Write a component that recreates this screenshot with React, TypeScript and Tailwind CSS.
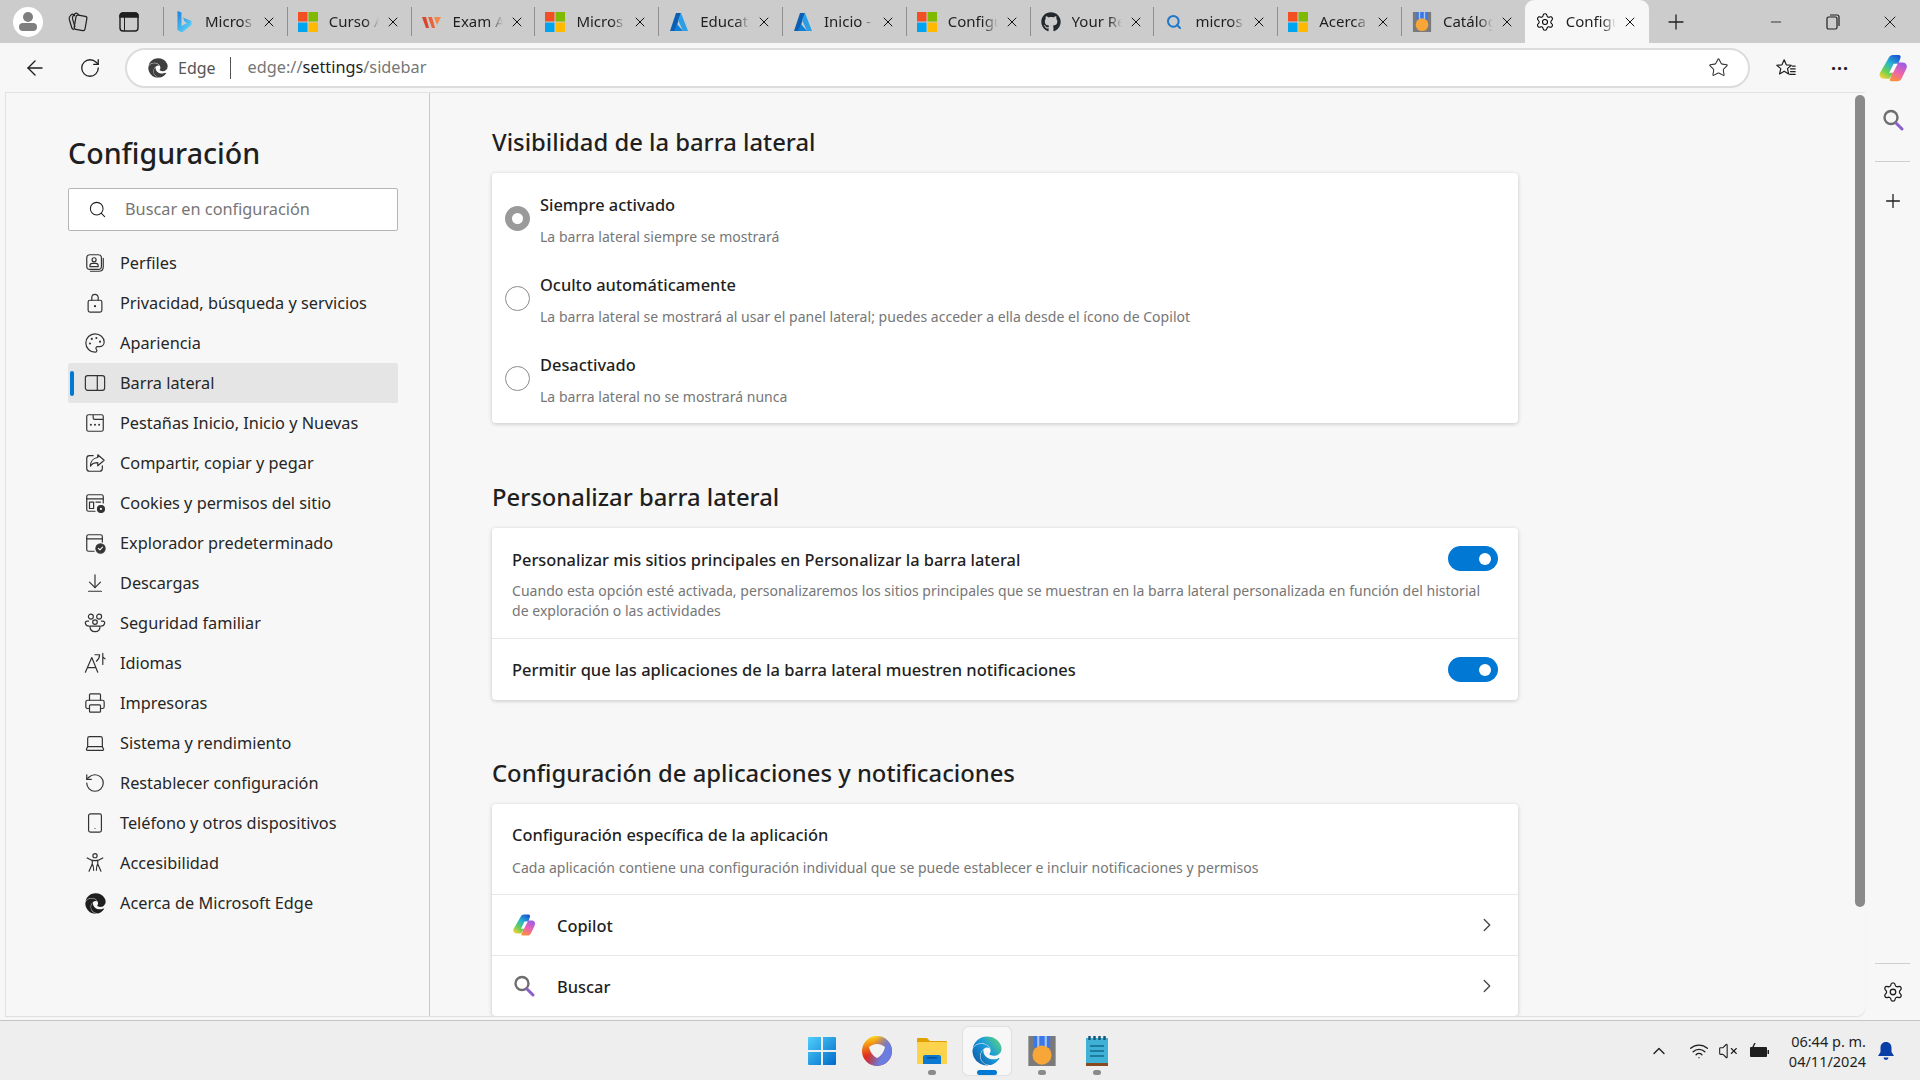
import type { ReactNode } from 'react';
import {
  ArrowDownToLine,
  ArrowLeft,
  ChevronRight,
  ChevronUp,
  Laptop,
  Minus,
  Palette,
  Plus,
  Printer,
  RotateCcw,
  RotateCw,
  Search,
  Settings,
  Smartphone,
  Star,
  VolumeX,
  Wifi,
  X,
} from 'lucide-react';
import { FaEdge, FaGithub } from 'react-icons/fa';

const font = "font-['Noto_Sans','Liberation_Sans',sans-serif]";

function Svg({ size = 22, children }: { size?: number; children: ReactNode }) {
  return (
    <svg width={size} height={size} viewBox="0 0 24 24" fill="none" stroke="currentColor" strokeWidth="1.3" strokeLinecap="round" strokeLinejoin="round">
      {children}
    </svg>
  );
}

function MsLogo() {
  return (
    <svg width="20" height="20" viewBox="0 0 20 20">
      <rect width="9.5" height="9.5" fill="#f25022" />
      <rect x="10.5" width="9.5" height="9.5" fill="#7fba00" />
      <rect y="10.5" width="9.5" height="9.5" fill="#00a4ef" />
      <rect x="10.5" y="10.5" width="9.5" height="9.5" fill="#ffb900" />
    </svg>
  );
}

function AzureLogo() {
  return (
    <svg width="20" height="20" viewBox="0 0 20 20">
      <path d="M7 1h5L6 19H1z" fill="#0a5fb4" />
      <path d="M12 1l7 18h-5L9 8z" fill="#2a9fe8" />
      <path d="M8 12l6 7H5z" fill="#0f7fd6" />
    </svg>
  );
}

function BingLogo() {
  return (
    <svg width="15" height="22" viewBox="0 0 15 22">
      <defs>
        <linearGradient id="bingGrad" x1="0" y1="0" x2="0.7" y2="1">
          <stop offset="0" stopColor="#1a7fdc" />
          <stop offset="1" stopColor="#5fd4f7" />
        </linearGradient>
      </defs>
      <path d="M0.500 0l4 1.500v13.500l5.500-3-2.500-1.500-1.500-4 8.500 3.500v4l-9.500 7.500-4.500-2.500z" fill="url(#bingGrad)" />
    </svg>
  );
}

function WhizLogo() {
  return (
    <svg width="20" height="20" viewBox="0 0 20 20">
      <path d="M0 5h4l3 11H4z" fill="#d8452c" />
      <path d="M6 5h4l3 11h-3z" fill="#e8623c" />
      <path d="M12 5h7l-4 8z" fill="#f08a4c" />
    </svg>
  );
}

function MedalLogo({ size = 22 }: { size?: number }) {
  return (
    <svg width={size} height={size} viewBox="0 0 22 22">
      <rect x="1" width="20" height="22" fill="#7a7a7a" />
      <path d="M5 0h12v8l-6 4-6-4z" fill="#3b78e7" />
      <path d="M7.500 0h1.500v8H7.500zM13 0h1.500v8H13z" fill="#a9c6f5" />
      <circle cx="11" cy="14" r="7" fill="#f7a637" />
    </svg>
  );
}

function CopilotLogo({ size = 24 }: { size?: number }) {
  const id = `cp${size}`;
  return (
    <svg width={size} height={size} viewBox="0 0 24 24">
      <defs>
        <linearGradient id={`${id}a`} x1="0.8" y1="0" x2="0.2" y2="1">
          <stop offset="0" stopColor="#1c56d6" />
          <stop offset="0.4" stopColor="#27b4cf" />
          <stop offset="0.75" stopColor="#6fd24f" />
          <stop offset="1" stopColor="#f3cf3a" />
        </linearGradient>
        <linearGradient id={`${id}b`} x1="0.7" y1="0" x2="0.3" y2="1">
          <stop offset="0" stopColor="#9a5ce8" />
          <stop offset="0.55" stopColor="#ee64ac" />
          <stop offset="1" stopColor="#f9913c" />
        </linearGradient>
      </defs>
      <path d="M8.500 4C9.200 2.300 10.500 1.500 12 1.500h4.500c1.300 0 1.900 1 1.500 2.200L16.500 8 12 16l-3 4.500H5C2 20.500.6 18.200 1.500 16z" fill={`url(#${id}a)`} />
      <path d="M15.500 22.500c1.600 0 2.800-.8 3.500-2.300l3.800-8c.9-2.200-.3-4.700-3-4.700H15L9.500 21c-.4 1 .3 1.500 1.200 1.500z" fill={`url(#${id}b)`} />
      <path d="M12.500 8.500h3.300L12 15.800H9z" fill="#ffffff" />
    </svg>
  );
}

function BuscarLogo() {
  return (
    <svg width="24" height="24" viewBox="0 0 24 24" fill="none" strokeWidth="2.4" strokeLinecap="round">
      <circle cx="10" cy="9.500" r="6.500" stroke="#6e6e6e" />
      <path d="M15 15l6 6" stroke="#8a5fc9" strokeWidth="3" />
    </svg>
  );
}

const tabs: { icon: ReactNode; title: string; active?: boolean }[] = [
  { icon: <BingLogo />, title: 'Micros' },
  { icon: <MsLogo />, title: 'Curso A' },
  { icon: <WhizLogo />, title: 'Exam A' },
  { icon: <MsLogo />, title: 'Micros' },
  { icon: <AzureLogo />, title: 'Educati' },
  { icon: <AzureLogo />, title: 'Inicio -' },
  { icon: <MsLogo />, title: 'Configu' },
  { icon: <FaGithub size={20} color="#24292f" />, title: 'Your Re' },
  { icon: <Search size={16} strokeWidth={3} color="#2077c9" />, title: 'micros' },
  { icon: <MsLogo />, title: 'Acerca' },
  { icon: <MedalLogo size={20} />, title: 'Catálog' },
  { icon: <Settings size={20} strokeWidth={1.3} />, title: 'Configu', active: true },
];

const navItems: { icon: ReactNode; label: string; active?: boolean }[] = [
  {
    label: 'Perfiles',
    icon: (
      <Svg>
        <rect x="3" y="3" width="16" height="16" rx="3.500" />
        <path d="M21 7v9c0 3-2 5-5 5H7" />
        <circle cx="11" cy="8.500" r="2.200" />
        <path d="M6.500 16v-1c0-1.500 1-2.500 2.500-2.500h4c1.500 0 2.500 1 2.500 2.500v1z" />
      </Svg>
    ),
  },
  {
    label: 'Privacidad, búsqueda y servicios',
    icon: (
      <Svg>
        <rect x="4.500" y="9" width="15" height="13" rx="2" />
        <path d="M8.500 9V6a3.500 3.500 0 0 1 7 0v3" />
        <circle cx="12" cy="15.500" r="0.600" fill="currentColor" />
      </Svg>
    ),
  },
  { label: 'Apariencia', icon: <Palette size={22} strokeWidth={1.3} /> },
  {
    label: 'Barra lateral',
    active: true,
    icon: (
      <Svg>
        <rect x="1.500" y="4" width="21" height="16" rx="2.500" />
        <path d="M14.500 4v16" />
      </Svg>
    ),
  },
  {
    label: 'Pestañas Inicio, Inicio y Nuevas',
    icon: (
      <Svg>
        <path d="M10 3H5a2 2 0 0 0-2 2v14a2 2 0 0 0 2 2h14a2 2 0 0 0 2-2V5a2 2 0 0 0-2-2h-9v3.500a1.500 1.500 0 0 0 1.500 1.500H21" />
        <path d="M7.500 14h.01M12 14h.01M16.500 14h.01" strokeWidth="2.200" />
      </Svg>
    ),
  },
  {
    label: 'Compartir, copiar y pegar',
    icon: (
      <Svg>
        <path d="M10 4H6a3 3 0 0 0-3 3v11a3 3 0 0 0 3 3h11a3 3 0 0 0 3-3v-3" />
        <path d="M15 3l7 6-7 6v-3.500c-4 0-6.500 1-8 4 0-5 3-9 8-9.500z" />
      </Svg>
    ),
  },
  {
    label: 'Cookies y permisos del sitio',
    icon: (
      <Svg>
        <path d="M12 21H5a2 2 0 0 1-2-2V5a2 2 0 0 1 2-2h14a2 2 0 0 1 2 2v7" />
        <path d="M3 7.500h18" />
        <rect x="6" y="11" width="4.500" height="7" />
        <path d="M13 11h5" />
        <circle cx="18.500" cy="18.500" r="3.800" fill="currentColor" />
        <circle cx="18.500" cy="18.500" r="1.200" fill="#f7f7f7" stroke="none" />
      </Svg>
    ),
  },
  {
    label: 'Explorador predeterminado',
    icon: (
      <Svg>
        <path d="M11 21H5a2 2 0 0 1-2-2V5a2 2 0 0 1 2-2h13a2 2 0 0 1 2 2v6" />
        <path d="M3 7.500h17" />
        <circle cx="18" cy="18" r="5" fill="currentColor" />
        <path d="M15.800 18l1.600 1.500 2.800-3" stroke="#f7f7f7" />
      </Svg>
    ),
  },
  { label: 'Descargas', icon: <ArrowDownToLine size={22} strokeWidth={1.3} /> },
  {
    label: 'Seguridad familiar',
    icon: (
      <Svg>
        <circle cx="7.500" cy="5" r="2.700" />
        <circle cx="16.500" cy="5" r="2.700" />
        <circle cx="12" cy="11" r="2.500" />
        <path d="M5 10H3.500C2 10 1 11 1.500 12.500 2 14.500 3.500 15.500 5.500 15.500M19 10h1.500c1.500 0 2.500 1 2 2.500-.5 2-2 3-4 3" />
        <path d="M6.500 15.500h11c0 3.500-2 6-5.500 6s-5.500-2.500-5.500-6z" />
      </Svg>
    ),
  },
  {
    label: 'Idiomas',
    icon: (
      <Svg>
        <path d="M1.500 22L8.500 6l6.500 16M4 17h9" />
        <path d="M12 3h5c0 3-1 5-3.500 7M20.500 1.500v12M20.500 5.500l2.500 2" />
      </Svg>
    ),
  },
  { label: 'Impresoras', icon: <Printer size={22} strokeWidth={1.3} /> },
  { label: 'Sistema y rendimiento', icon: <Laptop size={22} strokeWidth={1.3} /> },
  { label: 'Restablecer configuración', icon: <RotateCcw size={22} strokeWidth={1.3} /> },
  { label: 'Teléfono y otros dispositivos', icon: <Smartphone size={22} strokeWidth={1.3} /> },
  {
    label: 'Accesibilidad',
    icon: (
      <Svg>
        <circle cx="12" cy="4" r="2.300" />
        <path d="M3.500 6.500c3 2 5.500 3 8.500 3s5.500-1 8.500-3M9 10v3l-3.500 8M15 10v3l3.500 8M9 13c1 1.500 1.500 4 1.500 7M15 13c-1 1.500-1.500 4-1.500 7" />
      </Svg>
    ),
  },
  { label: 'Acerca de Microsoft Edge', icon: <FaEdge size={21} color="#1f1f1f" /> },
];

function Tab({ icon, title, active }: { icon: ReactNode; title: string; active?: boolean }) {
  return (
    <div className={`relative flex h-[43px] w-[123.8px] shrink-0 items-center pl-[10px] ${active ? 'rounded-t-[9px] bg-[#f7f7f7]' : 'border-l border-[#8f8f8f] [border-image:linear-gradient(#cccccc_18%,#8f8f8f_18%,#8f8f8f_82%,#cccccc_82%)_1]'}`}>
      <span className="flex w-[20px] shrink-0 justify-center">{icon}</span>
      <span className="ml-[11px] w-[50px] overflow-hidden whitespace-nowrap text-[15px] text-[#1f1f1f] [mask-image:linear-gradient(90deg,#000_72%,transparent)]">{title}</span>
      <X size={16} strokeWidth={1.5} className="ml-[6px] shrink-0 text-[#111]" />
    </div>
  );
}

function Heading({ children, className = '' }: { children: ReactNode; className?: string }) {
  return <h2 className={`h-[36px] text-[23.8px] font-medium leading-[36px] text-[#1f1f1f] ${className}`}>{children}</h2>;
}

function Card({ children }: { children: ReactNode }) {
  return <div className="mt-[13px] w-[1026px] rounded-[4px] bg-white shadow-[0_1px_4px_rgba(0,0,0,0.2)]">{children}</div>;
}

function RadioRow({ title, desc, checked }: { title: string; desc: string; checked?: boolean }) {
  return (
    <div className="flex h-[80px] items-center pl-[13px]">
      <span className={`h-[25px] w-[25px] shrink-0 rounded-full bg-white ${checked ? 'border-[7px] border-[#9a9a9a]' : 'border border-[#8a8a8a]'}`} />
      <div className="ml-[10px] flex flex-col pt-[5px]">
        <span className="text-[16.4px] font-medium leading-[22px] text-[#1f1f1f]">{title}</span>
        <span className="mt-[11px] text-[14px] leading-[20px] tracking-[0.03px] text-[#767676]">{desc}</span>
      </div>
    </div>
  );
}

function Toggle() {
  return (
    <span className="flex h-[25px] w-[50px] shrink-0 items-center justify-end rounded-full bg-[#0078d4] pr-[7px]">
      <span className="h-[12px] w-[12px] rounded-full bg-white" />
    </span>
  );
}

function AppRow({ icon, label }: { icon: ReactNode; label: string }) {
  return (
    <div className="flex h-[61px] items-center border-t border-[#e8e8e8] pl-[20px] pr-[20px]">
      <span className="flex w-[24px] justify-center">{icon}</span>
      <span className="ml-[21px] flex-1 pt-[2px] text-[16.4px] font-medium text-[#1f1f1f]">{label}</span>
      <ChevronRight size={22} strokeWidth={1.4} className="text-[#444]" />
    </div>
  );
}

function TaskDot({ children, dot, active }: { children: ReactNode; dot?: boolean; active?: boolean }) {
  return (
    <div className={`relative flex h-[48px] w-[48px] items-center justify-center rounded-[5px] ${active ? 'bg-[#f7f7f7] shadow-[0_0_2px_rgba(0,0,0,0.2)]' : ''}`}>
      {children}
      {dot && <span className="absolute bottom-0 h-[5px] w-[8px] rounded-full bg-[#8a8a8a]" />}
      {active && <span className="absolute bottom-0 h-[5px] w-[20px] rounded-full bg-[#0078d4]" />}
    </div>
  );
}

export default function App() {
  return (
    <div className={`flex h-screen w-[1920px] flex-col overflow-hidden bg-[#f7f7f7] ${font}`}>
      <svg width="0" height="0" className="absolute">
        <defs>
          <linearGradient id="edgeGrad" x1="1" y1="0.1" x2="0" y2="0.9">
            <stop offset="0" stopColor="#5ed67a" />
            <stop offset="0.45" stopColor="#1b9bdc" />
            <stop offset="1" stopColor="#0c59a4" />
          </linearGradient>
        </defs>
      </svg>

      {/* Tab strip */}
      <div className="flex h-[43px] shrink-0 items-center bg-[#cccccc]">
        <div className="flex w-[163px] shrink-0 items-center">
          <div className="ml-[13px] flex h-[30px] w-[30px] flex-col items-center justify-center rounded-full bg-white">
            <span className="h-[10px] w-[10px] rounded-full bg-[#7f7f7f]" />
            <span className="mt-[1px] h-[8px] w-[18px] rounded-[4px] bg-[#7f7f7f]" />
          </div>
          <span className="ml-[23px] text-[#1f1f1f]">
            <svg width="22" height="22" viewBox="0 0 22 22" fill="none" stroke="currentColor" strokeWidth="1.2" strokeLinejoin="round">
              <rect x="9" y="4.500" width="11" height="14.500" rx="2" transform="rotate(10 14 12)" />
              <path d="M9 5L7.500 3.500c-1-.8-1.800-.3-2.400.3L3.800 5.500C3 6.500 3 7.300 3.300 8.500l2.400 8c.3 1.200 1 1.800 2 2.200" />
              <path d="M13 4l-1.500-1.300c-1-.8-1.800-.6-2.500 0L7 5.200c-.8 1-.7 1.800-.4 3l2.400 8" />
            </svg>
          </span>
          <span className="ml-[31px] text-[#1f1f1f]">
            <svg width="20" height="22" viewBox="0 0 20 22" fill="none" stroke="currentColor" strokeWidth="1.4">
              <rect x="1" y="2" width="18" height="18" rx="3" />
              <path d="M1 6h18V5a3 3 0 0 0-3-3H4a3 3 0 0 0-3 3z" fill="currentColor" />
              <path d="M5.500 6v14" strokeWidth="1" />
            </svg>
          </span>
        </div>
        {tabs.map((t, i) => (
          <Tab key={i} {...t} />
        ))}
        <Plus size={24} strokeWidth={1.3} className="ml-[15px] text-[#1f1f1f]" />
        <div className="ml-auto flex items-center pr-[20px] text-[#1f1f1f]">
          <Minus size={16} strokeWidth={1.3} />
          <svg width="16" height="18" viewBox="0 0 16 18" fill="none" stroke="currentColor" strokeWidth="1.2" className="ml-[41px]">
            <rect x="2" y="4" width="10" height="12" rx="1.500" />
            <path d="M5 2h7a2 2 0 0 1 2 2v9" />
          </svg>
          <X size={20} strokeWidth={1.2} className="ml-[39px]" />
        </div>
      </div>

      {/* Toolbar */}
      <div className="flex h-[49px] shrink-0 items-center">
        <ArrowLeft size={24} strokeWidth={1.4} className="ml-[23px] text-[#1f1f1f]" />
        <RotateCw size={22} strokeWidth={1.4} className="ml-[32px] text-[#1f1f1f]" />
        <div className="ml-[24px] flex h-[40px] w-[1625px] items-center rounded-full border-2 border-[#dcdcdc] bg-white pl-[21px] pr-[19px]">
          <FaEdge size={20} color="#3f3f3f" />
          <span className="ml-[10px] text-[16px] text-[#555]">Edge</span>
          <span className="ml-[14px] h-[22px] w-px bg-[#555]" />
          <span className="ml-[17px] text-[16.3px] text-[#767676]">
            edge://<span className="text-[#1f1f1f]">settings</span>/sidebar
          </span>
          <Star size={21} strokeWidth={1.2} className="ml-auto text-[#333]" />
        </div>
        <span className="ml-[25px] text-[#1f1f1f]">
          <Svg>
            <path d="M10 3l2.300 5.500 5.500.5-4.200 3.700 1.300 5.800L10 15.500 5 18.500l1.300-5.800L2 9l5.600-.5z" />
            <path d="M17 13h5M17 16h5M16 19h6M19 10h3" />
          </Svg>
        </span>
        <span className="ml-[34px] text-[18px] font-bold leading-none tracking-[1px] text-[#1f1f1f]">···</span>
        <span className="ml-[29px]">
          <CopilotLogo size={30} />
        </span>
      </div>

      {/* Page */}
      <div className="flex h-[924px] shrink-0">
        <div className="ml-[5px] flex w-[1860px] overflow-hidden rounded-br-[8px] border-l border-t border-[#e3e3e3] shadow-[0_1px_1px_rgba(0,0,0,0.1)]">
          {/* Settings nav */}
          <aside className="w-[424px] shrink-0 border-r border-[#c8c8c8] pl-[62px] pr-[31px]">
            <h1 className="mt-[40px] h-[40px] text-[28.6px] font-medium leading-[40px] text-[#1f1f1f]">Configuración</h1>
            <div className="mt-[15px] flex h-[43px] w-[330px] items-center rounded-[2px] border border-[#b5b5b5] bg-white pl-[19px]">
              <Search size={19} strokeWidth={1.3} className="text-[#1f1f1f]" />
              <span className="ml-[18px] text-[16.3px] text-[#767676]">Buscar en configuración</span>
            </div>
            <nav className="mt-[12px] w-[330px]">
              {navItems.map((item) => (
                <div key={item.label} className={`relative flex h-[40px] items-center rounded-[2px] ${item.active ? 'bg-[#e5e5e5]' : ''}`}>
                  {item.active && <span className="absolute left-[2px] top-[8px] h-[25px] w-[4px] rounded-full bg-[#0078d4]" />}
                  <span className="ml-[16px] flex w-[22px] justify-center text-[#333]">{item.icon}</span>
                  <span className="ml-[14px] whitespace-nowrap text-[16.3px] text-[#262626]">{item.label}</span>
                </div>
              ))}
            </nav>
          </aside>

          {/* Settings content */}
          <main className="flex flex-1 overflow-hidden">
            <div className="flex-1 pl-[62px] pt-[31px]">
              <Heading>Visibilidad de la barra lateral</Heading>
              <Card>
                <div className="py-[5px]">
                  <RadioRow checked title="Siempre activado" desc="La barra lateral siempre se mostrará" />
                  <RadioRow title="Oculto automáticamente" desc="La barra lateral se mostrará al usar el panel lateral; puedes acceder a ella desde el ícono de Copilot" />
                  <RadioRow title="Desactivado" desc="La barra lateral no se mostrará nunca" />
                </div>
              </Card>

              <Heading className="mt-[56px]">Personalizar barra lateral</Heading>
              <Card>
                <div className="h-[110px] px-[20px] pt-[18px]">
                  <div className="flex items-center justify-between">
                    <span className="pt-[3px] text-[16.4px] font-medium leading-[22px] text-[#1f1f1f]">Personalizar mis sitios principales en Personalizar la barra lateral</span>
                    <Toggle />
                  </div>
                  <p className="mt-[10px] w-[980px] text-[14px] leading-[20px] tracking-[0.03px] text-[#767676]">
                    Cuando esta opción esté activada, personalizaremos los sitios principales que se muestran en la barra lateral personalizada en función del historial de exploración o las actividades
                  </p>
                </div>
                <div className="flex h-[62px] items-center justify-between border-t border-[#e8e8e8] px-[20px]">
                  <span className="pt-[2px] text-[16.5px] font-medium text-[#1f1f1f]">Permitir que las aplicaciones de la barra lateral muestren notificaciones</span>
                  <Toggle />
                </div>
              </Card>

              <Heading className="mt-[55px]">Configuración de aplicaciones y notificaciones</Heading>
              <Card>
                <div className="h-[90px] px-[20px] pt-[20px]">
                  <div className="text-[16.4px] font-medium leading-[22px] text-[#1f1f1f]">Configuración específica de la aplicación</div>
                  <div className="mt-[12px] text-[14px] leading-[20px] tracking-[0.03px] text-[#767676]">Cada aplicación contiene una configuración individual que se puede establecer e incluir notificaciones y permisos</div>
                </div>
                <AppRow icon={<CopilotLogo />} label="Copilot" />
                <AppRow icon={<BuscarLogo />} label="Buscar" />
              </Card>
            </div>
            <div className="w-[10px] shrink-0 pt-[2px]">
              <div className="h-[812px] rounded-full bg-[#8a8a8a]" />
            </div>
          </main>
        </div>

        {/* Edge sidebar */}
        <div className="flex flex-1 flex-col items-center">
          <span className="mt-[16px]">
            <BuscarLogo />
          </span>
          <span className="mt-[29px] h-px w-[35px] bg-[#cfcfcf]" />
          <Plus size={22} strokeWidth={1.4} className="mt-[28px] text-[#1f1f1f]" />
          <span className="mt-auto h-px w-[35px] bg-[#cfcfcf]" />
          <Settings size={22} strokeWidth={1.4} className="mb-[13px] mt-[17px] text-[#1f1f1f]" />
        </div>
      </div>

      {/* Taskbar */}
      <div className="mt-[4px] flex h-[60px] shrink-0 items-center border-t border-[#c4c4c4] bg-[#eeeeee]">
        <div className="ml-[798px] flex items-center gap-[7px]">
          <TaskDot>
            <svg width="30" height="30" viewBox="0 0 30 30">
              <defs>
                <linearGradient id="winGrad" x1="0" y1="0" x2="1" y2="1">
                  <stop offset="0" stopColor="#4fd0fb" />
                  <stop offset="1" stopColor="#0069c9" />
                </linearGradient>
              </defs>
              <path d="M1 2a1 1 0 0 1 1-1h12v13H1zM16 1h12a1 1 0 0 1 1 1v12H16zM1 16h13v13H2a1 1 0 0 1-1-1zM16 16h13v12a1 1 0 0 1-1 1H16z" fill="url(#winGrad)" />
            </svg>
          </TaskDot>
          <TaskDot>
            <svg width="30" height="30" viewBox="0 0 30 30">
              <defs>
                <linearGradient id="opGrad" x1="0.3" y1="0" x2="0.5" y2="1">
                  <stop offset="0" stopColor="#ffd814" />
                  <stop offset="0.6" stopColor="#e0301e" />
                  <stop offset="1" stopColor="#d01818" />
                </linearGradient>
                <linearGradient id="opBlue" x1="0.4" y1="0.2" x2="1" y2="0.5">
                  <stop offset="0" stopColor="#6a7de0" stopOpacity="0" />
                  <stop offset="0.7" stopColor="#6a7de0" />
                </linearGradient>
              </defs>
              <circle cx="15" cy="15" r="15" fill="url(#opGrad)" />
              <circle cx="15" cy="15" r="15" fill="url(#opBlue)" />
              <path d="M7 11c5-4 11-4 16 0-1 5-4 9-8 11-4-2-7-6-8-11z" fill="#f2f2f2" />
            </svg>
          </TaskDot>
          <TaskDot dot>
            <svg width="30" height="27" viewBox="0 0 30 27">
              <path d="M0 2a1 1 0 0 1 1-1h9l3 3h16a1 1 0 0 1 1 1v4H0z" fill="#e0a100" />
              <rect y="5" width="30" height="22" rx="1" fill="#fcd34d" />
              <path d="M6 27v-7a2 2 0 0 1 2-2h14a2 2 0 0 1 2 2v7z" fill="#0b78d1" />
              <rect x="10" y="20" width="10" height="1.500" fill="#064f8f" />
            </svg>
          </TaskDot>
          <TaskDot active>
            <FaEdge size={30} fill="url(#edgeGrad)" />
          </TaskDot>
          <TaskDot dot>
            <MedalLogo size={30} />
          </TaskDot>
          <TaskDot dot>
            <svg width="24" height="30" viewBox="0 0 24 30">
              <rect x="1" y="2" width="22" height="26" fill="#3fb0d6" />
              <rect x="1" y="27" width="22" height="3" fill="#8a4a1f" />
              <path d="M4.500 0v4M9.500 0v4M14.500 0v4M19.500 0v4" stroke="#14597c" strokeWidth="2.500" />
              <path d="M5 10h14M5 15h14M5 20h14" stroke="#14698f" strokeWidth="1.700" />
            </svg>
          </TaskDot>
        </div>
        <div className="ml-auto flex items-center pr-[25px] text-[#1f1f1f]">
          <ChevronUp size={20} strokeWidth={1.6} />
          <Wifi size={20} strokeWidth={1.6} className="ml-[20px]" />
          <VolumeX size={20} strokeWidth={1.3} className="ml-[9px]" />
          <svg width="20" height="16" viewBox="0 0 20 16" className="ml-[11px]">
            <path d="M2 4h15a1 1 0 0 1 1 1v8a1 1 0 0 1-1 1H2a1 1 0 0 1-1-1V5a1 1 0 0 1 1-1z" fill="#1f1f1f" />
            <rect x="18.500" y="7" width="1.500" height="4" fill="#1f1f1f" />
            <path d="M6 0L3 6h3l-2 4" stroke="#1f1f1f" strokeWidth="1.400" fill="none" />
          </svg>
          <div className="ml-[20px] flex flex-col items-end text-[14.5px] leading-[20px] text-[#1f1f1f]">
            <span>06:44 p. m.</span>
            <span>04/11/2024</span>
          </div>
          <svg width="18" height="20" viewBox="0 0 18 20" className="ml-[11px]">
            <path d="M9 1c3.500 0 5.500 2.500 5.500 6v4l2.500 4H1l2.500-4V7C3.500 3.500 5.500 1 9 1z" fill="#0b3fa8" />
            <path d="M6.500 16.500h5a2.500 2.500 0 0 1-5 0z" fill="#0b3fa8" />
          </svg>
        </div>
      </div>
    </div>
  );
}
